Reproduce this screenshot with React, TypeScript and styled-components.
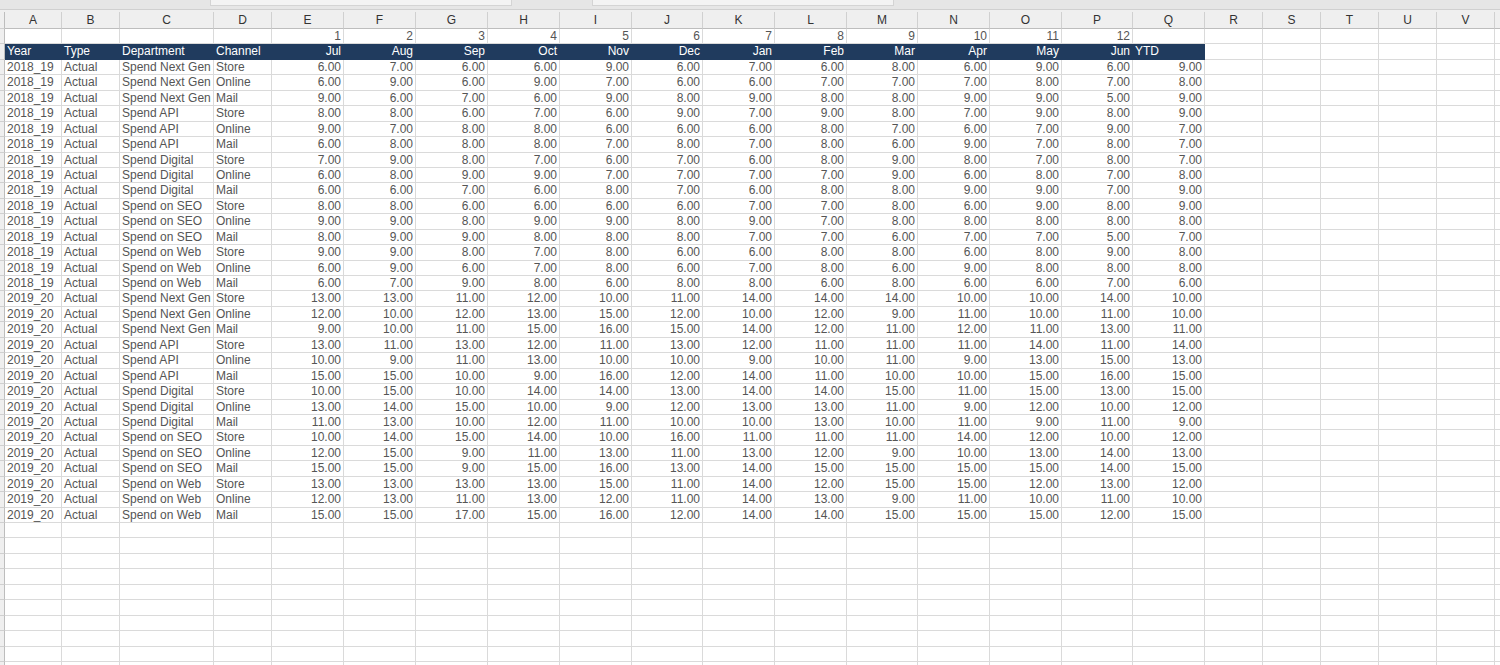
import React from "react";
import styled, { createGlobalStyle } from "styled-components";

const Global = createGlobalStyle`
  html, body { margin: 0; padding: 0; background: #fff; overflow: hidden; }
  body { font-family: "Liberation Sans", Arial, sans-serif; }
`;

const widths = [5, 57, 58, 94, 58, 72, 72, 72, 72, 72, 71, 72, 72, 71, 72, 72, 71, 72, 58, 58, 58, 58, 58, 40];
const letters = ["", "A", "B", "C", "D", "E", "F", "G", "H", "I", "J", "K", "L", "M", "N", "O", "P", "Q", "R", "S", "T", "U", "V", ""];

const Page = styled.div`
  width: 1500px;
  height: 665px;
  overflow: hidden;
  display: flex;
  flex-direction: column;
`;
const TopStrip = styled.div`
  height: 10px;
  flex: none;
  background: #e6e6e6;
  border-bottom: 1px solid #d0d0d0;
  box-sizing: border-box;
  display: flex;
  gap: 80px;
  padding-left: 210px;
`;
const Tab = styled.div`
  width: 300px;
  height: 5px;
  background: #f3f3f3;
  border: 1px solid #d4d4d4;
  border-top: none;
`;
const Grid = styled.div`
  display: grid;
  grid-template-columns: ${widths.map((w) => w + "px").join(" ")};
  grid-template-rows: 17px;
  grid-auto-rows: 15.45px;
  font-size: 12px;
  padding-top: 2px;
  background: #efefef;
`;
const ColHead = styled.div`
  background: #efefef;
  color: #333;
  border-right: 1px solid #d0d0d0;
  border-bottom: 1px solid #bdbdbd;
  box-sizing: border-box;
  text-align: center;
  line-height: 16px;
  font-size: 12px;
`;
const RowHead = styled.div`
  background: #efefef;
  border-right: 1px solid #bdbdbd;
  border-bottom: 1px solid #d0d0d0;
  box-sizing: border-box;
`;
const Cell = styled.div<{ $align?: string; $dark?: boolean }>`
  box-sizing: border-box;
  border-right: 1px solid ${(p) => (p.$dark ? "#203b5e" : "#dadada")};
  border-bottom: 1px solid ${(p) => (p.$dark ? "#203b5e" : "#dadada")};
  background: ${(p) => (p.$dark ? "#203b5e" : "#fff")};
  color: ${(p) => (p.$dark ? "#fff" : "#555")};
  text-align: ${(p) => p.$align || "left"};
  padding: 0 2px;
  line-height: 15px;
  white-space: nowrap;
  overflow: visible;
`;

const depts = ["Spend Next Gen", "Spend API", "Spend Digital", "Spend on SEO", "Spend on Web"];
const chans = ["Store", "Online", "Mail"];
const months = ["Jul", "Aug", "Sep", "Oct", "Nov", "Dec", "Jan", "Feb", "Mar", "Apr", "May", "Jun"];
const vals = [
  "6 7 6 6 9 6 7 6 8 6 9 6 9", "6 9 6 9 7 6 6 7 7 7 8 7 8", "9 6 7 6 9 8 9 8 8 9 9 5 9",
  "8 8 6 7 6 9 7 9 8 7 9 8 9", "9 7 8 8 6 6 6 8 7 6 7 9 7", "6 8 8 8 7 8 7 8 6 9 7 8 7",
  "7 9 8 7 6 7 6 8 9 8 7 8 7", "6 8 9 9 7 7 7 7 9 6 8 7 8", "6 6 7 6 8 7 6 8 8 9 9 7 9",
  "8 8 6 6 6 6 7 7 8 6 9 8 9", "9 9 8 9 9 8 9 7 8 8 8 8 8", "8 9 9 8 8 8 7 7 6 7 7 5 7",
  "9 9 8 7 8 6 6 8 8 6 8 9 8", "6 9 6 7 8 6 7 8 6 9 8 8 8", "6 7 9 8 6 8 8 6 8 6 6 7 6",
  "13 13 11 12 10 11 14 14 14 10 10 14 10", "12 10 12 13 15 12 10 12 9 11 10 11 10", "9 10 11 15 16 15 14 12 11 12 11 13 11",
  "13 11 13 12 11 13 12 11 11 11 14 11 14", "10 9 11 13 10 10 9 10 11 9 13 15 13", "15 15 10 9 16 12 14 11 10 10 15 16 15",
  "10 15 10 14 14 13 14 14 15 11 15 13 15", "13 14 15 10 9 12 13 13 11 9 12 10 12", "11 13 10 12 11 10 10 13 10 11 9 11 9",
  "10 14 15 14 10 16 11 11 11 14 12 10 12", "12 15 9 11 13 11 13 12 9 10 13 14 13", "15 15 9 15 16 13 14 15 15 15 15 14 15",
  "13 13 13 13 15 11 14 12 15 15 12 13 12", "12 13 11 13 12 11 14 13 9 11 10 11 10", "15 15 17 15 16 12 14 14 15 15 15 12 15",
].map((s) => s.split(" ").map((n) => Number(n).toFixed(2)));

const extra = 6;
const TOTAL_ROWS = 42;

export default function App() {
  const rows: React.ReactNode[] = [<RowHead key="corner" />];
  letters.forEach((l, i) => {
    if (i > 0) rows.push(<ColHead key={"h" + i}>{l}</ColHead>);
  });

  const emptyTail = (r: number) =>
    Array.from({ length: extra }, (_, k) => <Cell key={`t${r}-${k}`} />);

  rows.push(<RowHead key="r1h" />);
  for (let c = 0; c < 4; c++) rows.push(<Cell key={`r1-${c}`} />);
  for (let c = 0; c < 12; c++) rows.push(<Cell key={`r1n${c}`} $align="right">{c + 1}</Cell>);
  rows.push(<Cell key="r1q" />);
  rows.push(...emptyTail(1));

  rows.push(<RowHead key="r2h" />);
  ["Year", "Type", "Department", "Channel"].forEach((t) => rows.push(<Cell key={t} $dark>{t}</Cell>));
  months.forEach((m) => rows.push(<Cell key={m} $dark $align="right">{m}</Cell>));
  rows.push(<Cell key="ytd" $dark>YTD</Cell>);
  rows.push(...emptyTail(2));

  vals.forEach((v, i) => {
    const r = i + 3;
    rows.push(<RowHead key={`rh${r}`} />);
    rows.push(<Cell key={`a${r}`}>{i < 15 ? "2018_19" : "2019_20"}</Cell>);
    rows.push(<Cell key={`b${r}`}>Actual</Cell>);
    rows.push(<Cell key={`c${r}`}>{depts[Math.floor((i % 15) / 3)]}</Cell>);
    rows.push(<Cell key={`d${r}`}>{chans[i % 3]}</Cell>);
    v.forEach((n, k) => rows.push(<Cell key={`v${r}-${k}`} $align="right">{n}</Cell>));
    rows.push(...emptyTail(r));
  });

  for (let r = vals.length + 3; r <= TOTAL_ROWS; r++) {
    rows.push(<RowHead key={`rh${r}`} />);
    for (let c = 1; c < widths.length; c++) rows.push(<Cell key={`e${r}-${c}`} />);
  }

  return (
    <Page>
      <Global />
      <TopStrip>
        <Tab />
        <Tab />
      </TopStrip>
      <Grid>{rows}</Grid>
    </Page>
  );
}
